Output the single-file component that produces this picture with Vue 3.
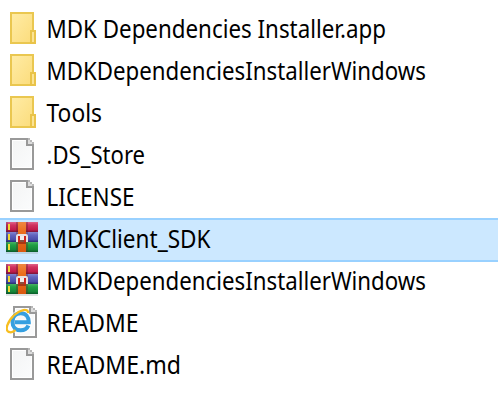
<script setup>
const files = [
  { name: 'MDK Dependencies Installer.app', kind: 'folder', width: 339.5 },
  { name: 'MDKDependenciesInstallerWindows', kind: 'folder', width: 379.5 },
  { name: 'Tools', kind: 'folder', width: 55.5 },
  { name: '.DS_Store', kind: 'file', width: 98.5 },
  { name: 'LICENSE', kind: 'file', width: 88 },
  { name: 'MDKClient_SDK', kind: 'archive', width: 164, selected: true },
  { name: 'MDKDependenciesInstallerWindows', kind: 'archive', width: 379.5 },
  { name: 'README', kind: 'web', width: 92 },
  { name: 'README.md', kind: 'file', width: 134.5 },
]
</script>

<template>
  <main class="list">
    <svg class="defs" width="0" height="0" aria-hidden="true">
      <defs>
        <linearGradient id="folder" x1="0" y1="0" x2="1" y2="1">
          <stop offset="0" stop-color="#ffeca6" /><stop offset="1" stop-color="#fbdc7b" />
        </linearGradient>
        <linearGradient id="paper" x1="0" y1="0" x2="1" y2="1">
          <stop offset="0" stop-color="#f3f4f4" /><stop offset="1" stop-color="#fbfcfd" />
        </linearGradient>
        <linearGradient id="red" x1="0" y1="0" x2="0" y2="1">
          <stop offset="0" stop-color="#e0648a" /><stop offset=".3" stop-color="#d03460" /><stop offset=".75" stop-color="#c01c4c" /><stop offset="1" stop-color="#791338" />
        </linearGradient>
        <linearGradient id="blue" x1="0" y1="0" x2="0" y2="1">
          <stop offset="0" stop-color="#8286d0" /><stop offset=".3" stop-color="#6265bf" /><stop offset=".75" stop-color="#4a4eaa" /><stop offset="1" stop-color="#292b70" />
        </linearGradient>
        <linearGradient id="green" x1="0" y1="0" x2="0" y2="1">
          <stop offset="0" stop-color="#48b164" /><stop offset=".3" stop-color="#20a044" /><stop offset=".75" stop-color="#16873a" /><stop offset="1" stop-color="#095b28" />
        </linearGradient>
        <linearGradient id="strap" x1="0" y1="0" x2="0" y2="1">
          <stop offset="0" stop-color="#ef8742" /><stop offset=".3" stop-color="#ec701e" /><stop offset="1" stop-color="#d95810" />
        </linearGradient>
      </defs>
    </svg>

    <div v-for="(file, i) in files" :key="i" class="row" :class="{ selected: file.selected }">
      <svg class="icon" viewBox="0 0 32 32" aria-hidden="true">
        <g v-if="file.kind === 'folder'">
          <path d="M5 1H27V31H5Z" fill="url(#folder)" stroke="#eac750" stroke-width="2" />
          <path d="M25 31V19H29V31Z" fill="#fbe394" stroke="#e9c349" stroke-width="2" />
        </g>

        <g v-else-if="file.kind === 'archive'">
          <rect y="30" width="32" height="2" fill="#809090" opacity=".25" />
          <rect width="32" height="10" fill="url(#red)" />
          <rect y="10" width="32" height="10" fill="url(#blue)" />
          <rect y="20" width="32" height="10" fill="url(#green)" />
          <path d="M0 0H2V30H0Z" fill="#17203b" opacity=".18" />
          <path d="M2 2H4V8H2ZM2 12H4V18H2ZM2 22H4V28H2Z" fill="#f3da30" />
          <path d="M10 0H22V30H10Z" fill="#65251b" opacity=".35" />
          <path d="M12 0H20V30H12Z" fill="url(#strap)" />
          <path d="M10 20V14Q10 12 12 12H20Q22 12 22 14V20Z" fill="#e9e1e0" />
          <path d="M12 14H14V20H12ZM18 14H20V20H18Z" fill="#d1241c" />
          <path d="M14 16H18V20H14Z" fill="#8a5040" />
          <path d="M14 14H18V18H14Z" fill="#f2ede9" />
          <path d="M12 20H20V22H12Z" fill="#a93814" />
        </g>

        <g v-else>
          <g :transform="file.kind === 'web' ? 'translate(3 0)' : undefined">
            <path d="M5 1H27V31H5Z" fill="url(#paper)" stroke="#999" stroke-width="2" />
            <path d="M6.5 2.5H25.5V29.5H6.5Z" fill="none" stroke="#fff" />
            <path d="M20 0H22V2H20ZM20 2H22V8H20ZM20 6H28V8H20Z" fill="#999" />
            <path d="M22 0H28V6H22Z" fill="#ddd" />
            <path d="M24 0H28V2H24ZM26 2H28V4H26Z" fill="#fff" />
            <path d="M22 0H24V2H22ZM24 2H26V4H24ZM26 4H28V6H26Z" fill="#b8b8b8" />
          </g>
          <g v-if="file.kind === 'web'" fill="none">
            <path d="M23.2 18.8C22 23 19 25.2 14.7 25.2C9.2 25.2 6 21.6 6 16C6 10.5 9.5 6.8 14.8 6.8C20.2 6.8 23.5 10.5 23.5 16.3H9" stroke="#fff" stroke-width="5.8" opacity=".65" />
            <path d="M22.4 19.5C21 22.8 18.4 24.3 14.7 24.3C9.6 24.3 6.5 21.2 6.5 16C6.5 10.8 9.8 7.3 14.8 7.3C19.9 7.3 22.8 10.7 22.8 16.3H9" stroke="#359fe0" stroke-width="4" />
            <path d="M3.2 26.2C-2 24.8 1.6 15 8.3 9C14.3 3.6 21.8 1.8 22.3 7" stroke="#f7be20" stroke-width="2.3" />
            <path d="M2.7 25.6C4.8 27 7.5 25.8 9.5 24.2" stroke="#f7be20" stroke-width="2.2" />
          </g>
        </g>
      </svg>
      <svg class="name" :width="file.width + 4" height="42">
        <text x="0.5" y="30" :textLength="file.width" lengthAdjust="spacingAndGlyphs">{{ file.name }}</text>
      </svg>
    </div>
  </main>
</template>

<style>
body {
  margin: 0;
  background: #fff;
}
</style>

<style scoped>
.list {
  box-sizing: border-box;
  width: 498px;
  height: 408px;
  padding-top: 8px;
  overflow: hidden;
  background: #fff;
}
.defs {
  display: block;
}
.row {
  display: flex;
  align-items: flex-start;
  gap: 8px;
  box-sizing: border-box;
  height: 42px;
  padding-left: 6px;
}
.selected {
  background: #cce8ff;
  box-shadow: inset 0 2px #99d1ff, 0 2px #99d1ff;
}
.icon {
  flex: none;
  width: 32px;
  height: 32px;
  margin-top: 4px;
}
.name {
  flex: none;
  display: block;
  overflow: visible;
  font-family: "Noto Sans", "Open Sans", sans-serif;
  font-size: 24.5px;
  fill: #000;
}
</style>
